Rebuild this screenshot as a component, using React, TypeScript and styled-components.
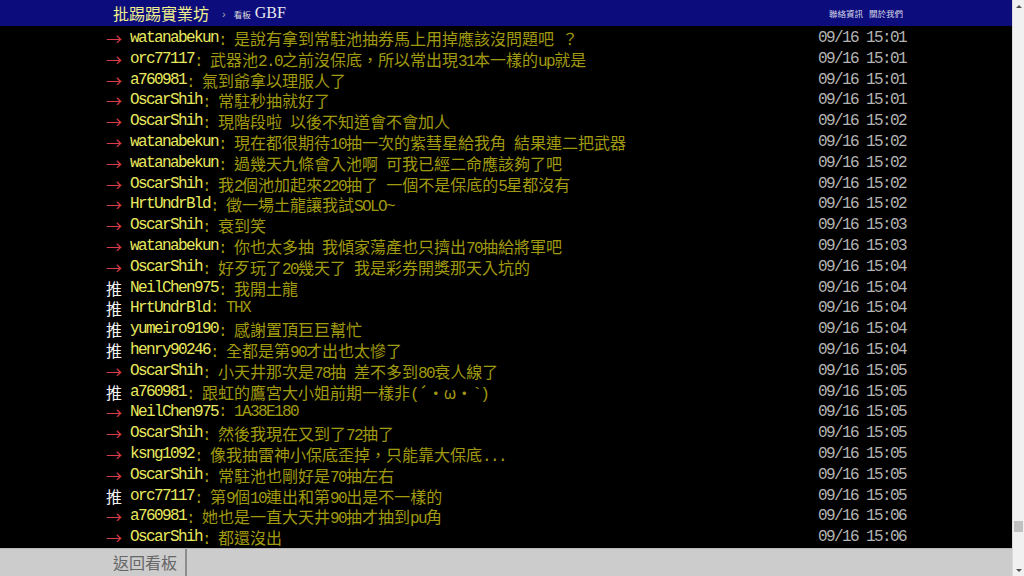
import { useLayoutEffect, useRef, useState } from "react";
import styled, { createGlobalStyle } from "styled-components";

const GlobalStyle = createGlobalStyle`
    html {
        background: #000;
        scrollbar-width: none;
    }
    html::-webkit-scrollbar {
        display: none;
    }
    body {
        margin: 0;
        background: #000;
        color: #ccc;
        font-family: "Liberation Mono", "Noto Sans CJK TC", monospace;
    }
`;

const Topbar = styled.div`
    position: fixed;
    top: 0;
    left: 0;
    right: 12px;
    height: 26px;
    background: #0c0c7c;
    z-index: 2;
`;

const TopbarInner = styled.div`
    width: 800px;
    height: 100%;
    margin: 0 auto;
    padding: 0 3px 0 7px;
    box-sizing: border-box;
    display: flex;
    align-items: center;
`;

const Logo = styled.span`
    font: 16px/26px "Noto Sans CJK TC", sans-serif;
    color: #f0f08c;
`;

const Crumb = styled.span`
    font: 11px "Liberation Sans", sans-serif;
    color: #aaa;
    margin: 2px 8px 0 13px;
`;

const BoardLabel = styled.span`
    font: 8.5px "Noto Sans CJK TC", sans-serif;
    color: #ddd;
    margin: 2px 4px 0 0;
`;

const BoardName = styled.span`
    font: 16px "Liberation Serif", serif;
    color: #e8e8f0;
`;

const TopLinks = styled.div`
    margin-left: auto;
    display: flex;
    gap: 6px;
    font: 8.5px "Noto Sans CJK TC", sans-serif;
    color: #d8d8e8;
`;

const Page = styled.div`
    padding: 26px 12px 0 0;
`;

const Main = styled.div`
    width: 800px;
    margin: 0 auto;
`;

const ArticleBody = styled.div`
    min-height: 26650px;
`;

const PushList = styled.div`
    padding-bottom: 1700px;
`;

const Push = styled.div`
    display: flex;
    height: 20.8px;
    line-height: 20.8px;
    font-size: 16px;
    white-space: nowrap;
`;

const Tag = styled.span<{ $push: boolean }>`
    width: 24px;
    flex: none;
    font-family: "Noto Sans CJK TC", sans-serif;
    color: ${({ $push }) => ($push ? "#f4f4f4" : "#d83c48")};
`;

const UserId = styled.span`
    color: #e8e85e;
`;

const Content = styled.span`
    color: #a09a10;
`;

const IpDate = styled.span`
    margin-left: auto;
    color: #b4b4b4;
`;

const Latin = styled.span`
    font-family: "Liberation Mono", monospace;
    letter-spacing: -1.6px;
`;

const Wide = styled.span`
    font-family: "Noto Sans CJK TC", sans-serif;
    letter-spacing: 0;
`;

const Navigation = styled.div`
    position: fixed;
    left: 0;
    right: 12px;
    bottom: 0;
    height: 27px;
    background: #ccc;
    border-top: 1px solid #b8b8b8;
    z-index: 2;
`;

const NavInner = styled.div`
    width: 800px;
    height: 100%;
    margin: 0 auto;
    display: flex;
`;

const BarButton = styled.a`
    padding: 0 8px 0 7px;
    font: 16px/27px "Noto Sans CJK TC", sans-serif;
    color: #666;
    border-right: 2px solid #8c8c8c;
`;

const ScrollBar = styled.div`
    position: fixed;
    top: 0;
    right: 0;
    bottom: 0;
    width: 12px;
    background: #f1f1f1;
    border-left: 1px solid #dcdcdc;
    box-sizing: border-box;
    display: flex;
    flex-direction: column;
    z-index: 3;
`;

const ScrollArrow = styled.div<{ $down?: boolean }>`
    height: 12px;
    flex: none;
    display: flex;
    align-items: center;
    justify-content: center;

    &::before {
        content: "";
        border-left: 3px solid transparent;
        border-right: 3px solid transparent;
        ${({ $down }) =>
            $down ? "border-top: 3px solid #505050;" : "border-bottom: 3px solid #505050;"}
    }
`;

const ScrollTrack = styled.div`
    flex: 1;
    position: relative;
`;

const ScrollThumb = styled.div`
    position: absolute;
    left: 1px;
    right: 1px;
    background: #c1c1c1;
`;

type PushRow = [string, string, string, string];

const pushes: PushRow[] = [
    ["→", "watanabekun", "是說有拿到常駐池抽券馬上用掉應該沒問題吧 ？", "09/16 15:01"],
    ["→", "orc77117", "武器池2.0之前沒保底，所以常出現31本一樣的up就是", "09/16 15:01"],
    ["→", "a760981", "氣到爺拿以理服人了", "09/16 15:01"],
    ["→", "OscarShih", "常駐秒抽就好了", "09/16 15:01"],
    ["→", "OscarShih", "現階段啦 以後不知道會不會加人", "09/16 15:02"],
    ["→", "watanabekun", "現在都很期待10抽一次的紫彗星給我角 結果連二把武器", "09/16 15:02"],
    ["→", "watanabekun", "過幾天九條會入池啊 可我已經二命應該夠了吧", "09/16 15:02"],
    ["→", "OscarShih", "我2個池加起來220抽了 一個不是保底的5星都沒有", "09/16 15:02"],
    ["→", "HrtUndrBld", "徵一場土龍讓我試SOLO~", "09/16 15:02"],
    ["→", "OscarShih", "衰到笑", "09/16 15:03"],
    ["→", "watanabekun", "你也太多抽 我傾家蕩產也只擠出70抽給將軍吧", "09/16 15:03"],
    ["→", "OscarShih", "好歹玩了20幾天了 我是彩券開獎那天入坑的", "09/16 15:04"],
    ["推", "NeilChen975", "我開土龍", "09/16 15:04"],
    ["推", "HrtUndrBld", "THX", "09/16 15:04"],
    ["推", "yumeiro9190", "感謝置頂巨巨幫忙", "09/16 15:04"],
    ["推", "henry90246", "全都是第90才出也太慘了", "09/16 15:04"],
    ["→", "OscarShih", "小天井那次是78抽 差不多到80衰人線了", "09/16 15:05"],
    ["推", "a760981", "跟虹的鷹宮大小姐前期一樣非(´・ω・`)", "09/16 15:05"],
    ["→", "NeilChen975", "1A38E180", "09/16 15:05"],
    ["→", "OscarShih", "然後我現在又到了72抽了", "09/16 15:05"],
    ["→", "ksng1092", "像我抽雷神小保底歪掉，只能靠大保底...", "09/16 15:05"],
    ["→", "OscarShih", "常駐池也剛好是70抽左右", "09/16 15:05"],
    ["推", "orc77117", "第9個10連出和第90出是不一樣的", "09/16 15:05"],
    ["→", "a760981", "她也是一直大天井90抽才抽到pu角", "09/16 15:06"],
    ["→", "OscarShih", "都還沒出", "09/16 15:06"],
];

// half-width ascii runs vs full-width runs, like the BBS terminal grid
function Term({ text }: { text: string }) {
    const parts = text.split(/([\x20-\x7e]+)/).filter(Boolean);
    return (
        <>
            {parts.map((p, i) =>
                /^[\x20-\x7e]+$/.test(p) ? <Latin key={i}>{p}</Latin> : <Wide key={i}>{p}</Wide>
            )}
        </>
    );
}

export default function App() {
    const listRef = useRef<HTMLDivElement>(null);
    const [thumb, setThumb] = useState({ top: 0, height: 20 });

    useLayoutEffect(() => {
        const el = listRef.current;
        if (el) {
            const top = el.getBoundingClientRect().top + window.scrollY;
            window.scrollTo(0, top - 28);
        }
        const doc = document.documentElement;
        const track = window.innerHeight - 24;
        const h = Math.max(11, (track * window.innerHeight) / doc.scrollHeight);
        const max = doc.scrollHeight - window.innerHeight;
        setThumb({ top: max > 0 ? ((track - h) * window.scrollY) / max : 0, height: h });
    }, []);

    return (
        <>
            <GlobalStyle />
            <Topbar>
                <TopbarInner>
                    <Logo>批踢踢實業坊</Logo>
                    <Crumb>›</Crumb>
                    <BoardLabel>看板</BoardLabel>
                    <BoardName>GBF</BoardName>
                    <TopLinks>
                        <span>聯絡資訊</span>
                        <span>關於我們</span>
                    </TopLinks>
                </TopbarInner>
            </Topbar>
            <Page>
                <Main>
                    <ArticleBody />
                    <PushList ref={listRef}>
                        {pushes.map(([tag, user, content, time], i) => (
                            <Push key={i}>
                                <Tag $push={tag === "推"}>{tag}</Tag>
                                <UserId><Term text={user} /></UserId>
                                <Content><Term text={": " + content} /></Content>
                                <IpDate><Term text={time} /></IpDate>
                            </Push>
                        ))}
                    </PushList>
                </Main>
            </Page>
            <Navigation>
                <NavInner>
                    <BarButton>返回看板</BarButton>
                </NavInner>
            </Navigation>
            <ScrollBar>
                <ScrollArrow />
                <ScrollTrack>
                    <ScrollThumb style={{ top: thumb.top, height: thumb.height }} />
                </ScrollTrack>
                <ScrollArrow $down />
            </ScrollBar>
        </>
    );
}
